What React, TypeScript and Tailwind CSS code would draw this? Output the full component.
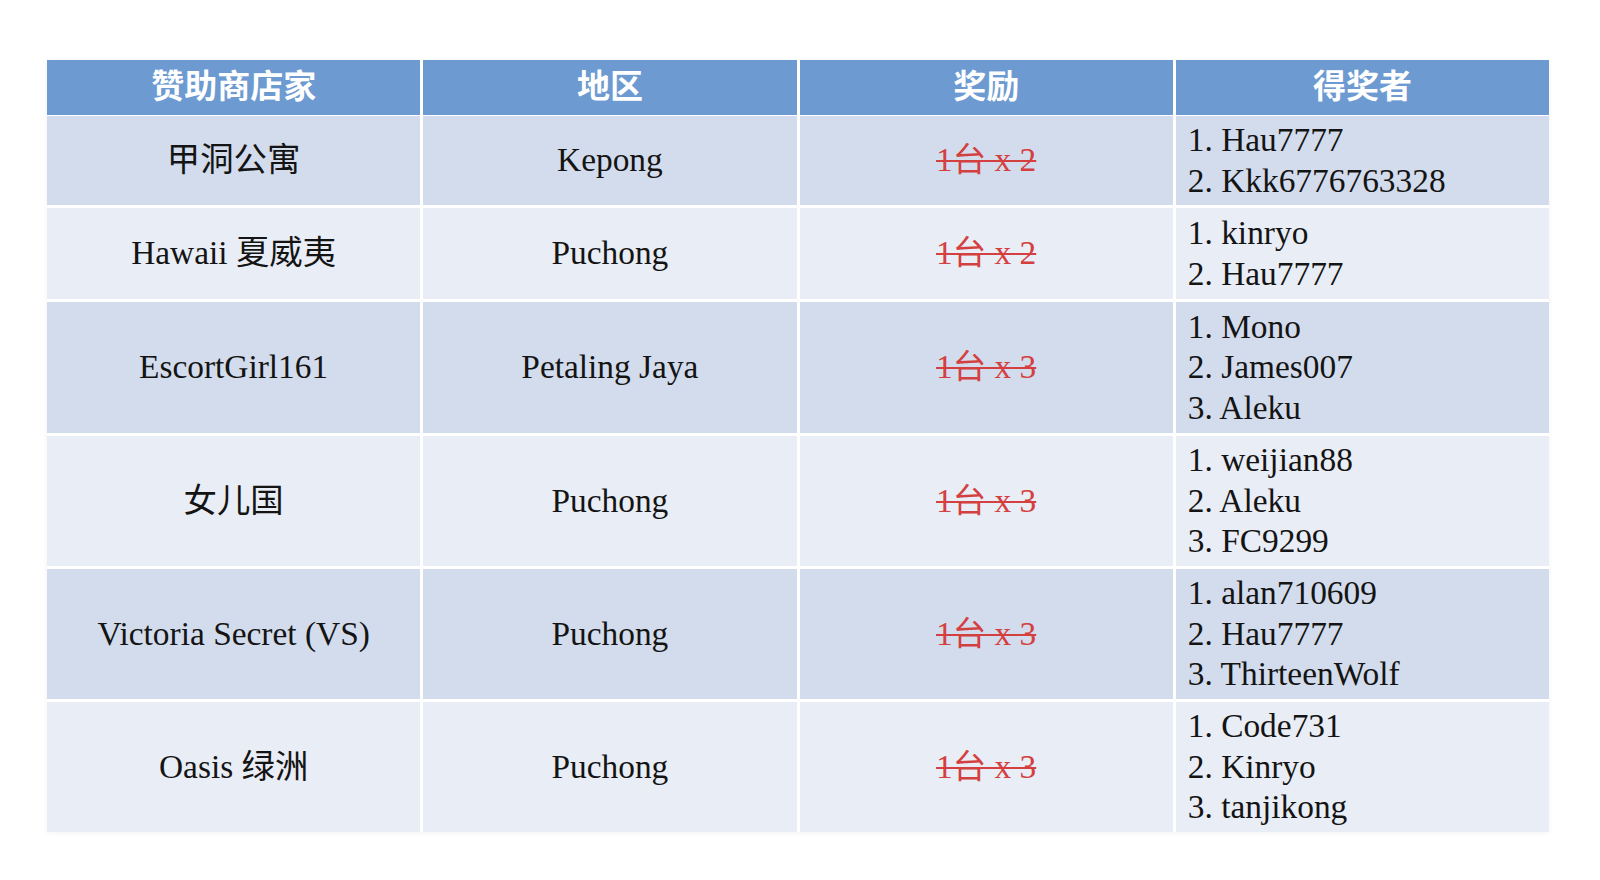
const rows = [
    { shop: "甲洞公寓", area: "Kepong", prize: "1台 x 2", winners: ["Hau7777", "Kkk6776763328"], h: "h-[89px]" },
    { shop: "Hawaii 夏威夷", area: "Puchong", prize: "1台 x 2", winners: ["kinryo", "Hau7777"], h: "h-[91px]" },
    { shop: "EscortGirl161", area: "Petaling Jaya", prize: "1台 x 3", winners: ["Mono", "James007", "Aleku"], h: "h-[131px]" },
    { shop: "女儿国", area: "Puchong", prize: "1台 x 3", winners: ["weijian88", "Aleku", "FC9299"], h: "h-[130px]" },
    { shop: "Victoria Secret (VS)", area: "Puchong", prize: "1台 x 3", winners: ["alan710609", "Hau7777", "ThirteenWolf"], h: "h-[130px]" },
    { shop: "Oasis 绿洲", area: "Puchong", prize: "1台 x 3", winners: ["Code731", "Kinryo", "tanjikong"], h: "h-[130px]" },
];

const headers = ["赞助商店家", "地区", "奖励", "得奖者"];

export default function App() {
    return (
        <div className="h-[880px] w-[1600px] bg-white pl-[47px] pt-[60px] font-['Liberation_Serif','Noto_Sans_CJK_SC',serif] text-[33.4px] text-[#141414]">
            <div className="flex w-[1502px] flex-col gap-[3px] shadow-[0_1px_6px_rgba(0,0,0,0.05)]">
                <div className="mb-[1px] grid h-[52px] grid-cols-4 gap-x-[3px]">
                    {headers.map((label) => (
                        <div
                            key={label}
                            className="flex items-center justify-center bg-[#6c9ad1] pb-[5px] font-['Noto_Sans_CJK_SC',sans-serif] text-[33px] font-bold text-white"
                        >
                            {label}
                        </div>
                    ))}
                </div>

                {rows.map((row, i) => {
                    const bg = i % 2 === 0 ? "bg-[#d3dcec]" : "bg-[#e9edf6]";
                    return (
                        <div key={row.shop} className={`grid grid-cols-4 gap-x-[3px] ${row.h}`}>
                            <div className={`flex items-center justify-center ${bg}`}>{row.shop}</div>
                            <div className={`flex items-center justify-center ${bg}`}>{row.area}</div>
                            <div className={`flex items-center justify-center ${bg}`}>
                                <span className="text-[#d4403f] line-through decoration-[1.5px]">{row.prize}</span>
                            </div>
                            <div className={`flex flex-col justify-center pl-[12px] leading-[40.5px] ${bg}`}>
                                {row.winners.map((name, n) => (
                                    <div key={name + n}>
                                        {n + 1}. {name}
                                    </div>
                                ))}
                            </div>
                        </div>
                    );
                })}
            </div>
        </div>
    );
}
